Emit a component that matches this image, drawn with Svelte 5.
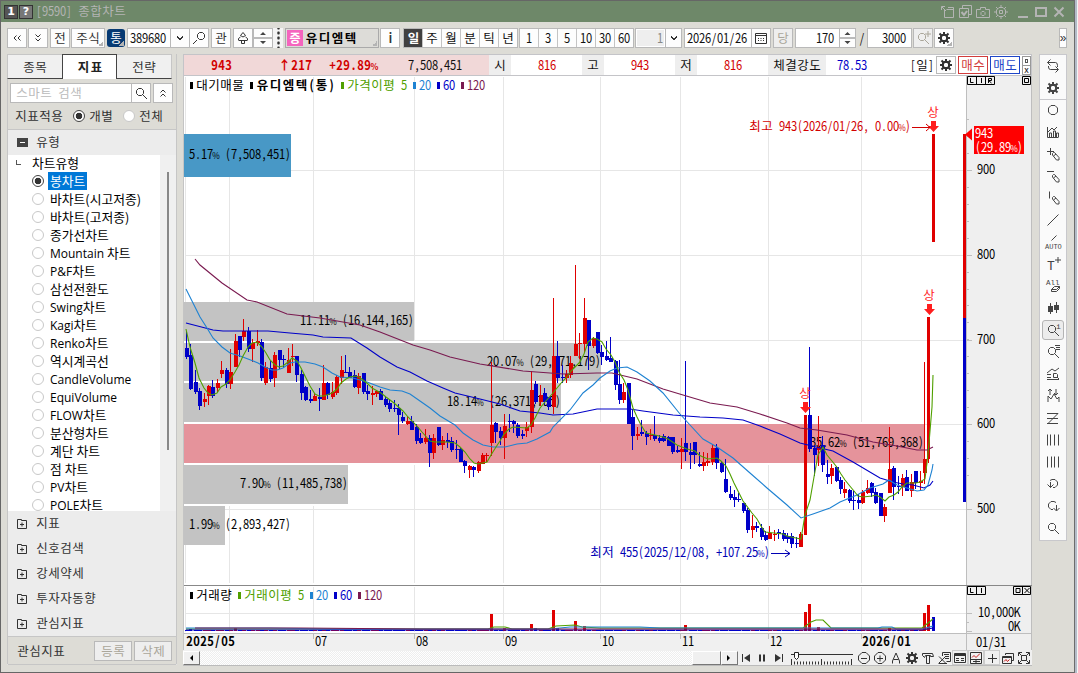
<script lang="ts">
	interface Run {
		text: string;
		wide: boolean;
		x: number;
		xs: string;
	}

	const HALF = 6;
	const FULL = 12;
	const SQUEEZE = 0.86;

	// fixed cell text: half width cells for latin, full width cells for hangul
	function layout(text: string, bold = false) {
		const half = bold ? HALF + 1 : HALF;
		const full = bold ? FULL + 1 : FULL;
		const runs: Run[] = [];
		let width = 0;
		for (const part of text.match(/[\x00-\x7f]+|[^\x00-\x7f]+/g) ?? []) {
			const wide = part.charCodeAt(0) > 127;
			const cell = wide ? full : half;
			const k = wide ? 1 : SQUEEZE;
			const xs = [...part].map((_, i) => (((i + 0.5) * cell) / k).toFixed(2)).join(' ');
			runs.push({ text: part, wide, x: width, xs });
			width += part.length * cell;
		}
		return { runs, width };
	}

	const chartTypes = [
		'봉차트', '바차트(시고저종)', '바차트(고저종)', '종가선차트', 'Mountain 차트', 'P&F차트',
		'삼선전환도', 'Swing차트', 'Kagi차트', 'Renko차트', '역시계곡선', 'CandleVolume',
		'EquiVolume', 'FLOW차트', '분산형차트', '계단 차트', '점 차트', 'PV차트', 'POLE차트'
	];
	const groups = ['지표', '신호검색', '강세약세', '투자자동향', '관심지표'];
	const periods = ['일', '주', '월', '분', '틱', '년'];
	const minutes = ['1', '3', '5', '10', '30', '60'];

	// colour, high, low, body top, body bottom
	const candles = `b331,359,348,357 b344,390,355,389 b370,394,382,392 b388,410,391,406 r393,407,399,402
r385,405,386,396 b380,398,387,396 r379,392,383,388 r361,378,370,374 b368,388,370,384
r349,389,372,384 r334,367,341,367 b336,357,336,350 r319,341,331,337 b327,352,331,349
r339,362,343,349 r330,346,341,343 b339,381,342,378 r362,385,367,383 b361,382,368,379
r352,387,355,378 b350,369,350,360 b355,368,359,360 r348,373,360,373 r344,366,356,357
b356,382,356,375 b370,400,374,393 b386,401,387,400 b390,403,399,401 r393,401,396,401
b388,411,397,399 r365,400,383,400 b382,399,383,395 r382,399,392,397 r375,395,377,393
r356,384,370,378 b355,373,372,373 b367,378,372,378 b370,388,375,387 r373,394,376,388
b373,394,373,392 b385,400,391,394 r386,405,393,395 r390,397,391,394 b389,400,391,400
b396,407,399,405 b399,412,403,409 b400,412,408,409 b404,435,408,415 b412,423,417,421
r416,425,421,424 b416,430,421,430 b424,444,427,441 b433,444,438,443 r429,444,438,442
b435,467,438,453 r434,459,438,453 b427,446,427,445 r436,450,440,445 b433,448,440,442
b437,452,441,450 b440,459,449,450 b447,462,449,462 b460,473,461,466 r465,478,466,470
b466,477,467,470 r461,473,462,471 r453,464,455,464 r453,462,455,456 r362,456,425,443
b422,443,423,432 b427,445,431,438 r414,459,426,438 b414,432,421,422 b420,433,421,424
b423,438,425,436 b430,439,434,436 r422,437,427,431 r371,433,390,427 b381,404,384,402
r385,406,395,402 b388,405,393,402 b397,410,397,407 r298,414,356,407 b341,383,356,378
b365,383,377,378 r370,383,374,378 r356,378,363,375 r265,356,344,356 r333,359,343,344
r298,352,318,344 b320,370,320,346 r337,348,338,346 b332,354,332,353 b345,365,352,357
b341,361,356,360 b337,362,358,362 b360,390,361,385 b360,404,384,400 r383,403,392,400
b383,424,383,424 b410,450,417,436 r427,440,434,436 b420,436,432,434 b431,445,433,437
r429,440,435,436 b416,441,435,439 b435,443,438,441 b434,442,436,441 b436,446,437,446
b437,454,437,452 b446,453,450,452 r438,469,449,452 b361,461,443,452 b443,469,452,455
b442,464,442,455 b452,467,464,466 r452,471,462,466 r453,466,461,463 r444,465,448,462
b444,469,448,463 b462,473,463,472 b459,493,479,492 b486,500,494,498 b490,507,497,500
b493,502,499,500 b503,513,503,511 b508,533,510,530 r515,538,526,530 b522,532,526,528
b524,540,528,537 b531,541,535,540 r526,539,533,539 r530,541,534,535 b529,539,532,534
b530,541,533,539 b533,543,536,539 b533,548,536,544 b537,548,543,544 r532,547,534,547
r415,535,415,535 b347,452,415,449 b445,476,448,455 r416,466,447,450 b436,472,445,465
b460,484,474,477 r464,484,468,476 b466,482,467,481 b477,494,480,489 r482,498,489,493
b489,503,490,501 b491,510,500,501 b494,509,500,503 r490,504,492,503 r480,494,488,493
b482,497,483,493 b488,504,492,503 b493,516,493,516 r504,522,507,516 r427,493,469,493
b466,500,468,487 b476,494,486,487 r474,496,478,487 b470,491,477,491 r474,497,482,491
b471,489,471,483 r471,490,481,483 r362,484,459,473 r317,463,317,459 r134,242,134,242`
		.split(/\s+/)
		.map((s, i) => {
			const [high, low, top, bottom] = s.slice(1).split(',').map(Number);
			const x = Math.floor(186.4 + i * 4.42);
			return { x, up: s[0] === 'r', high, low, top, bottom };
		});

	const averages = [
		{
			color: '#7a1a50',
			points:
				'195,259 200,265 222,283 247,300 257,302 287,314 320,318 360,325 380,332 413,345 430,350 450,357 480,364 523,371 550,373 563,374 597,373 612,373 637,379 663,389 683,395 710,403 737,407 760,414 787,423 800,428 817,430 847,435 873,442 897,446 917,450 927,450 933,447'
		},
		{
			color: '#0000c8',
			points:
				'186,323 213,330 223,331 268,331 290,333 313,335 323,337 351,338 367,348 380,357 397,367 410,372 427,381 443,388 455,393 480,399 500,404 520,411 540,413 553,415 573,414 597,409 630,409 643,411 673,415 700,417 723,418 743,420 760,426 780,434 800,443 820,448 833,451 853,462 880,478 893,482 903,484 913,485 924,488 930,485 933,481'
		},
		{
			color: '#1e82d2',
			points:
				'186,289 193,303 200,317 207,328 213,338 222,347 230,353 240,356 248,359 258,363 265,367 272,370 277,370 283,368 290,363 295,362 305,362 315,364 323,367 332,373 340,377 353,378 367,382 380,387 390,390 402,391 410,394 420,401 430,408 440,416 455,425 463,433 473,440 483,445 493,447 505,447 517,444 527,443 537,439 550,432 553,427 570,410 583,393 593,385 600,378 610,371 617,368 627,367 637,372 650,381 663,393 680,414 690,425 703,439 717,447 733,458 750,473 767,488 787,505 801,518 813,514 830,508 840,502 857,495 870,488 883,484 889,480 897,485 907,488 917,491 924,490 928,485 932,470 933,464'
		},
		{
			color: '#50a000',
			points:
				'186,329 190,347 195,363 199,378 204,388 208,393 212,395 217,393 221,387 226,384 230,380 235,372 239,365 243,356 248,347 252,343 257,342 262,347 266,353 270,360 275,365 279,367 283,366 288,362 292,358 297,361 301,368 306,378 310,386 315,394 319,396 324,396 332,393 337,389 341,383 346,379 350,377 355,376 359,377 363,380 368,384 372,388 381,393 386,397 394,403 403,411 408,417 417,426 422,432 430,441 435,442 447,442 455,443 460,447 465,452 470,459 474,463 478,464 487,462 491,455 496,447 500,441 504,434 509,429 513,427 527,428 531,425 535,418 540,408 545,402 553,393 557,388 562,382 566,378 571,371 575,367 580,362 584,354 588,342 593,338 597,339 602,342 606,349 611,355 615,362 619,372 624,380 628,390 633,408 637,417 641,425 646,433 655,435 663,437 668,439 677,445 687,449 695,451 699,455 703,457 708,459 717,458 721,461 726,466 730,474 734,483 739,493 743,501 752,513 757,519 761,526 765,532 774,533 783,534 787,536 796,538 801,539 805,515 810,500 814,477 818,455 823,447 827,455 832,461 836,466 841,474 845,480 849,485 854,491 858,496 863,497 872,496 876,495 880,497 885,501 889,497 894,495 898,492 902,487 907,483 916,483 920,482 925,479 927,463 929,443 932,407 933,375'
		}
	];

	// volume bars that stand out from the floor: top edge by candle index
	const volumePeaks: Record<number, number> = {
		1: 629, 11: 628, 69: 614, 72: 628, 78: 624, 79: 628, 83: 610, 84: 628, 88: 621, 90: 626,
		113: 625, 140: 612, 141: 604, 143: 627, 159: 628, 167: 613, 168: 605, 169: 617
	};
	const redVolume = [113, 141, 143, 159];

	const bands = [
		{ y: 134, h: 43, end: 291, color: '#4898c6', text: '5.17% (7,508,451)', ty: 159 },
		{ y: 302, h: 39, end: 414, color: '#c3c3c3', text: '11.11% (16,144,165)', ty: 325 },
		{ y: 343, h: 38, end: 601, color: '#c3c3c3', text: '20.07% (29,171,179)', ty: 366 },
		{ y: 383, h: 39, end: 561, color: '#c3c3c3', text: '18.14% (26,371,795)', ty: 406 },
		{ y: 424, h: 39, end: 924, color: '#e5939b', text: '35.62% (51,769,368)', ty: 447 },
		{ y: 465, h: 39, end: 348, color: '#c3c3c3', text: '7.90% (11,485,738)', ty: 488 },
		{ y: 506, h: 39, end: 225, color: '#c3c3c3', text: '1.99% (2,893,427)', ty: 529 }
	];

	const gridX = [185, 229, 313, 414, 503, 600, 680, 768, 861];
	const priceLevels = [900, 800, 700, 600, 500].map((p) => ({ p, y: Math.round(170 + (900 - p) * 0.8475) }));
	const minorTicks = Array.from({ length: 22 }, (_, i) => Math.round(119 + i * 16.95));
	const months = [
		['07', 315], ['08', 416], ['09', 505], ['10', 602], ['11', 682], ['12', 770]
	] as const;

	const priceLegend = [
		[190, '대기매물', '#000'], [250, '유디엠텍(통)', '#000'], [341, '가격이평 5', '#50a000'],
		[413, '20', '#1e82d2'], [437, '60', '#0000c8'], [461, '120', '#7a1a50']
	] as const;
	const volumeLegend = [
		[190, '거래량', '#000'], [238, '거래이평 5', '#50a000'],
		[310, '20', '#1e82d2'], [334, '60', '#0000c8'], [358, '120', '#7a1a50']
	] as const;
	const limitMarks = [
		[933, 116], [929, 299], [805, 397]
	];

	interface Icon {
		d?: string;
		fill?: string;
		bold?: string;
		text?: [number, number, number, string][];
	}

	const pencil = 'M7.5 7.5l1-1h1l4.500 5v2.500h-2.500l-4-5zM8.500 10l2.500-2';
	const lens = 'M5.5 3.5h3l2 2v3l-2 2h-3l-2-2v-3zM10 10l4 4';
	const icons: Record<string, Icon> = {
		loop: { d: 'M5.5 1.5l-3 3 3 3M2.5 4.5h8q2 0 2 3v1.5M10.500 8.500l3 3-3 3M13 11.500h-7.500q-2 0-2-2.500v-1' },
		gear: { bold: 'M6.500 5h3L11 6.500v3L9.500 11h-3L5 9.500v-3zM8 2v3M8 11v3M2 8h3M11 8h3M3.500 3.500l2 2M10.500 10.500l2 2M12.500 3.500l-2 2M5.500 10.500l-2 2' },
		sun: { d: 'M6 3.500h4L12.500 6v4L10 12.500H6L3.500 10V6zM6.500 6.500h3v3h-3zM8 1v3M8 12v3M1 8h3M12 8h3M3 3l2 2M11 11l2 2M13 3l-2 2M5 11l-2 2' },
		circle: { d: 'M6 3.5h4l2.500 2.500v4l-2.500 2.500h-4l-2.500-2.500v-4z' },
		bars: { d: 'M2.500 3v10.500h11M4.500 13v-4h2v4M8.500 13v-6h2v6M11.500 13v-4h2v4M3 8l4-4 2 2 3-3' },
		plusPen: { d: 'M2 5.500h7M5.500 2v7' + pencil },
		minusPen: { d: 'M2 3.500h7' + pencil },
		barPen: { d: 'M4.500 1.500v7' + pencil },
		line: { d: 'M2.500 13.500l11-11' },
		auto: { d: 'M6.500 6.500l5-5', text: [[0, 15, 7, 'AUTO']] },
		text: { d: 'M13 1v6M10 4h6', text: [[2, 14, 13, 'T']] },
		eraser: { d: 'M6.500 11.500l3-3h5v2l-3 3h-5zM6.500 11.500h5l3-3', text: [[1, 7, 7.5, 'All']] },
		candles: { d: 'M5.500 3v11M11.500 2v11', fill: 'M3 6h5v6H3zM9 5h5v5H9z' },
		lensInfo: { d: lens, text: [[11, 7, 8, 'i']] },
		lensList: { d: lens + 'M10 1.500h5M11 3.500h4M11 5.500h4' },
		lensChart: { d: 'M2 7l5-4 3 2 4-3M2 8.500h4M2 11.500h4M2 13.500h12M8.500 7.500h3l1 1v3h-4zM12 11l2 2' },
		arrows: { d: 'M3 14V8l3 3 3-5 3 5 2-2v5M3 3l2-2 2 2M5 1v6M9 5l2 2 2-2M11 1v6' },
		zed: { d: 'M2 3.500h11M2 8.500h11M2 13.500h11M13 3.500L3 13.500' },
		fib: { d: 'M2.500 2.500v11M5.500 2.500v11M9.500 2.500v11M13.500 2.500v11' },
		four: { d: 'M2.500 2.500v11M6.500 2.500v11M9.500 2.500v11M13.500 2.500v11' },
		undo: { d: 'M5 4.500l2-1h3l2.500 2.500v3l-2.500 2.500h-2M5.500 6v5.500M2.500 8.500l3 3 3-3' },
		redo: { d: 'M11 4.500l-2-1H6L3.500 6v3L6 11.500h2M11.500 7v5.500M8.500 10l3 3 3-3' },
		search: { d: lens },
		searchBack: { d: 'M8.500 2.500h3l2 2v3l-2 2h-3l-2-2v-3zM6 10l-4 4' },
		searchPlus: { d: lens + 'M13 1v6M10 4h6' },
		chevron: { d: 'M5 6l3 3 3-3M5 7l3 3 3-3' },
		up2: { d: 'M5.500 7.500L8 5l2.500 2.500M5.500 11.500L8 9l2.500 2.500' },
		down2: { d: 'M5.500 4.500L8 7l2.500-2.500M5.500 8.500L8 11l2.500-2.500' },
		left2: { d: 'M7.500 5.500L5 8l2.500 2.500M11.500 5.500L9 8l2.500 2.500' },
		flower: { d: 'M8 2.500l-2.500 3L8 7l2.500-1.500zM3.500 10v-1.500l2-1.500M12.500 10v-1.500l-2-1.500M3.500 10.500h9M6.500 11v2.500h3V11' },
		calendar: { d: 'M2.500 3.500h11v10h-11zM2.500 5.500h11M5 8.500h1M7.500 8.500h1M10 8.500h1M5 10.500h1M7.500 10.500h1M10 10.500h1' },
		folder: { d: 'M3.500 3.500h4v1h5v8h-9zM8 6.500v4M6 8.500h4' },
		sendOut: { d: 'M2.500 6V2.500H6M3 3l4 4M5.500 5.500v8h9v-8h-7M9 3.500h5.500V7' },
		stackCheck: { d: 'M5.500 4V1.500h9v9H12M2.500 4.500h9v9h-9z', bold: 'M4.500 8l2.500 3 3-4' },
		camera: { d: 'M1.500 5.500h4v-2h5v2h4v8h-13zM7 7.500h2l1 1v2l-1 1H7l-1-1v-2z' },
		minus: { bold: 'M3 13h10' },
		square: { bold: 'M3 4h10v8H3z' },
		close: { bold: 'M3.500 3.500l9 9M12.500 3.500l-9 9' },
		first: { d: 'M4.500 4v8', fill: 'M12 4v8L6 8z' },
		pause: { bold: 'M6 4.500v7M10 4.500v7' },
		last: { d: 'M12.500 4v8', fill: 'M5 4v8l6-4z' },
		zoomOut: { d: 'M6 2.500h4L13.500 6v4L10 13.500H6L2.500 10V6zM5 8.500h6' },
		zoomIn: { d: 'M6 2.500h4L13.500 6v4L10 13.500H6L2.500 10V6zM5 8.500h6M8 5.500v6' },
		letter: { d: 'M4.500 13.500V11L8 3l3.500 8v2.500M5.500 9.500h5' },
		hammer: { d: 'M2.500 3.500h10l1 3h-3v-1h-5l-1 2-2-2zM6.500 6v7.500h3V6' },
		tableX: { d: 'M6.500 6V2.500h8v9h-4M8 4.500h5M9 6.500h4M9 8.500h4M3 6.500l7 7M9.500 6.500l-7 7M3 13.500h8' },
		table: { d: 'M2.500 3.500h11v9h-11zM4 8.500h3M9 8.500h3M4 10.500h3M9 10.500h3', bold: 'M3 5h10' },
		chartBox: { d: 'M2.500 2.500h11v11h-11zM2.500 9.500h11M5 11.500h7M8 10v3' },
		cross: { d: 'M8.500 4v9M4 8.500h9' },
		windows: { d: 'M5.500 5V3.500h8v7H12M2.500 6.500h9v7h-9z', bold: 'M3 7h8' },
		expand: { d: 'M2.500 6V2.500H6M10 2.500h3.500V6M13.500 10v3.500H10M6 13.500H2.500V10M5.500 5.500h5v5h-5zM3 3l2.500 2.500M13 3l-2.500 2.500M3 13l2.500-2.500M13 13l-2.500-2.500' }
	};
	const redTraces: Record<string, string> = {
		chartBox: 'M4 7.500l2-2 2 2 4-4',
		windows: 'M4 11.500l2-2 1.500 2 2-2'
	};

	const sideTools = [
		'loop', 'gear', 'circle', 'bars', 'plusPen', 'minusPen', 'barPen', 'line', 'auto', 'text', 'eraser',
		'candles', 'lensInfo', 'lensList', 'lensChart', 'arrows', 'zed', 'fib', 'four', 'undo', 'redo', 'search'
	];
	const titleTools = ['sendOut', 'stackCheck', 'camera', 'sun'];
	const playback = ['first', 'pause', 'last'];
	const chartTools = [
		'zoomOut', 'zoomIn', 'letter', 'gear', 'hammer', 'tableX', 'table', 'chartBox', 'cross', 'windows', 'expand'
	];
</script>

{#snippet mono(x: number, y: number, text: string, bold = false)}
	<g class="mono" class:bold>
		{#each layout(text, bold).runs as run}
			{#if run.wide}
				<text class="wide" x={run.xs} transform="translate({x + run.x} {y})">{run.text}</text>
			{:else}
				<text x={run.xs} transform="translate({x + run.x} {y}) scale({SQUEEZE} 1)"
					>{#each run.text.split(/(%)/) as piece}<tspan class:percent={piece === '%'}>{piece}</tspan>{/each}</text
				>
			{/if}
		{/each}
	</g>
{/snippet}

{#snippet label(text: string, bold = false)}
	<svg class="label" width={layout(text, bold).width} height="16">{@render mono(0, 13, text, bold)}</svg>
{/snippet}

{#snippet icon(name: string)}
	{@const shape = icons[name]}
	<svg class="icon" viewBox="0 0 16 16" width="16" height="16">
		{#if shape.d}<path d={shape.d} />{/if}
		{#if shape.bold}<path class="thick" d={shape.bold} />{/if}
		{#if shape.fill}<path class="solid" d={shape.fill} />{/if}
		{#if redTraces[name]}<path class="trace" d={redTraces[name]} />{/if}
		{#each shape.text ?? [] as [x, y, size, text]}
			<text {x} {y} font-size={size}>{text}</text>
		{/each}
	</svg>
{/snippet}

{#snippet spinner()}
	<span class="spinner">
		<svg viewBox="0 0 18 18" width="100%" height="18" preserveAspectRatio="xMidYMid slice">
			<path d="M0 9h18" stroke="#bbb" stroke-width="2" />
			<path d="M6 6l3-3 3 3zM6 12l3 3 3-3z" fill="#444" />
		</svg>
	</span>
{/snippet}

<div class="window">
	<header class="titlebar">
		<span class="badge">1</span>
		<span class="badge grey">?</span>
		<span class="caption">{@render label('[9590] 종합차트')}</span>
		<span class="title-tools">
			{#each titleTools as name}{@render icon(name)}{/each}
		</span>
		<span class="window-buttons">
			{@render icon('minus')}{@render icon('square')}{@render icon('close')}
		</span>
	</header>

	<div class="toolbar">
		<button class="btn">{@render icon('left2')}</button>
		<button class="btn gap1">{@render icon('down2')}</button>
		<button class="btn gap2">{@render label('전')}</button>
		<button class="btn gap1 stock corner">{@render label('주식')}</button>
		<button class="btn gap2 unified corner">{@render label('통')}</button>
		<span class="field code">{@render label('389680')}</span>
		<button class="btn join">{@render icon('chevron')}</button>
		<button class="btn join">{@render icon('searchBack')}</button>
		<button class="btn gap2">{@render label('관')}</button>
		<button class="btn gap2">{@render icon('flower')}</button>
		{@render spinner()}
		<span class="more"></span>
		<span class="name corner"><i>증</i>{@render label('유디엠텍', true)}</span>
		<button class="btn gap1">{@render label('i', true)}</button>
		<div class="segments">
			{#each periods as period, i}
				<button class:active={i === 0}>{@render label(period, i === 0)}</button>
			{/each}
		</div>
		<div class="segments minutes">
			{#each minutes as minute}<button>{@render label(minute)}</button>{/each}
		</div>
		<span class="field unit"><em>{@render label('1')}</em></span>
		<button class="btn join narrow">{@render icon('chevron')}</button>
		<span class="field date">{@render label('2026/01/26')}</span>
		<button class="btn join">{@render icon('calendar')}</button>
		<button class="btn gap2 dim">{@render label('당')}</button>
		<span class="field count">{@render label('170')}</span>
		{@render spinner()}
		<span class="slash">{@render label('/')}</span>
		<span class="field total">{@render label('3000')}</span>
		<button class="btn gap1 dim">{@render icon('searchPlus')}</button>
		<button class="btn gap1 corner">{@render icon('gear')}</button>
		<button class="btn overflow">»</button>
	</div>

	<div class="body">
		<aside class="sidebar">
			<nav class="tabs">
				<span>{@render label('종목')}</span>
				<span class="active">{@render label('지표', true)}</span>
				<span>{@render label('전략')}</span>
			</nav>
			<div class="search">
				<span class="query">{@render label('스마트 검색')}</span>
				<button class="btn join">{@render icon('search')}</button>
				<button class="btn gap2">{@render icon('up2')}</button>
			</div>
			<div class="apply">
				{@render label('지표적용')}
				<i class="radio on"></i>{@render label('개별')}
				<i class="radio"></i>{@render label('전체')}
			</div>
			<div class="group open"><i class="folder-open"></i>{@render label('유형')}</div>
			<div class="tree">
				<ul>
					<li class="root">차트유형</li>
					{#each chartTypes as type, i}
						<li class:selected={i === 0}>
							<i class="radio" class:on={i === 0}></i>
							<span
								>{#each type.split(/([A-Za-z&]+)/) as part, j}{#if j % 2}<em>{part}</em>{:else}{part}{/if}{/each}</span
							>
						</li>
					{/each}
				</ul>
				<div class="scroll"><i></i></div>
			</div>
			{#each groups as group}
				<div class="group">{@render icon('folder')}{@render label(group)}</div>
			{/each}
			<div class="favorites">
				{@render label('관심지표')}
				<button>{@render label('등록')}</button>
				<button>{@render label('삭제')}</button>
			</div>
		</aside>

		<main class="main">
			<div class="quote">
				<div class="price">
					{@render label('943', true)}
					<span class="change">{@render label('↑217', true)}</span>
					<span class="rate">{@render label('+29.89%', true)}</span>
					<span class="volume">{@render label('7,508,451')}</span>
				</div>
				{#each [['시', '816'], ['고', '943'], ['저', '816']] as [key, value]}
					<span class="key">{@render label(key)}</span>
					<span class="value">{@render label(value)}</span>
				{/each}
				<span class="key strength">{@render label('체결강도')}</span>
				<span class="power">{@render label('78.53')}</span>
				<span class="mode">{@render label('[일]')}</span>
				<button class="btn small">{@render icon('gear')}</button>
				<button class="trade buy">{@render label('매수')}</button>
				<button class="trade sell">{@render label('매도')}</button>
				<span class="mini"><i></i><b>x</b></span>
			</div>

			<svg class="chart" viewBox="183 76 849 574" width="849" height="574">
				<rect x="183" y="76" width="1" height="574" fill="#c4c4c4" />
				<rect x="966" y="76" width="66" height="574" fill="#efefef" />
				<rect x="184" y="633" width="782" height="17" fill="#f0f0f0" />

				{#each gridX as x}
					<path class="grid" d="M{x + 0.5} 77V583M{x + 0.5} 587V632" />
				{/each}
				{#each priceLevels as { y }}
					<path class="grid" d="M185 {y + 0.5}H966" />
				{/each}
				<path class="grid" d="M185 613.500H966" />

				{#each bands as band, i}
					<rect x="184" y={band.y} width={band.end - 184} height={band.h} fill={band.color} />
					{#if i > 1}
						<rect x="184" y={band.y - 2} width={Math.max(band.end, bands[i - 1].end) - 184} height="2" fill="#fff" />
					{/if}
				{/each}
				{#each bands as band}
					{@render mono(Math.max(189, band.end - band.text.length * 6), band.ty, band.text)}
				{/each}

				{#each candles as c}
					<g fill={c.up ? '#e00000' : '#0000c8'}>
						<rect x={c.x} y={c.high} width="1" height={c.low - c.high} />
						<rect x={c.x - 1} y={c.top} width={c.bottom - c.top > 80 ? 3 : 4} height={c.bottom - c.top} />
					</g>
				{/each}
				{#each averages as line}
					<polyline class="average" points={line.points} stroke={line.color} />
				{/each}

				{#each limitMarks as [x, y]}
					<g fill="#ff1e1e">
						{@render mono(x - 6, y + 1, '상')}
						<path d="M{x - 2} {y + 5}h5v5h3l-5.500 6-5.500-6h3z" />
					</g>
				{/each}
				<g fill="#d20000" stroke="none">
					{@render mono(749, 131, '최고 943(2026/01/26, 0.00%)')}
					<path d="M912 127.500H930M926 124l4 3.500-4 3.500" fill="none" stroke="#d20000" />
				</g>
				<g fill="#0000b4">
					{@render mono(590, 557, '최저 455(2025/12/08, +107.25%)')}
					<path d="M771 553.500H790M785 550l5 3.500-5 3.500" fill="none" stroke="#0000b4" />
				</g>

				<rect x="963" y="134" width="3" height="184" fill="#e00000" />
				<rect x="963" y="318" width="3" height="184" fill="#0000c8" />

				{#each priceLegend as [x, text, color], i}
					<rect {x} y="82" width="3" height="7" fill={color} />
					<g fill={color}>{@render mono(x + 6, 90, text, i === 1)}</g>
				{/each}

				{#each candles as c, i}
					<rect
						x={c.x - 1}
						y={volumePeaks[i] ?? 630}
						width={volumePeaks[i] ? 3 : 4}
						height={631 - (volumePeaks[i] ?? 630)}
						fill={i !== 169 && (c.up || redVolume.includes(i)) ? '#e00000' : '#0000c8'}
					/>
				{/each}
				<path class="average" stroke="#50a000" d="M186 629H488L494 627L505 627L512 629H548L556 626L575 625L582 627L600 628H803L811 622L816 620H823L831 628H922L933 619" />
				<path class="average" stroke="#1e82d2" d="M186 628H270L330 629H550L570 627H640L660 628H805L878 628L882 627H892L896 629H922L933 626" />
				<path class="average" stroke="#0000c8" d="M186 630H922L933 628" />
				<path class="average" stroke="#7a1a50" d="M195 628H300L420 629H930" />
				{#each volumeLegend as [x, text, color]}
					<rect {x} y="592" width="3" height="7" fill={color} />
					<g fill={color}>{@render mono(x + 6, 600, text)}</g>
				{/each}

				<path class="frame" d="M966.500 76V650M184 633.500H1032M1031.500 76V650" />
				<path d="M184 585.500H1032" stroke="#888" />
				{#each priceLevels as { p, y }}
					<path class="frame" d="M967 {y + 0.5}h5" />
					{@render mono(977, y + 4, String(p))}
				{/each}
				{#each minorTicks as y}
					<path class="frame" d="M967 {y + 0.5}h2" />
				{/each}
				<path class="frame" d="M967 613.500h5M967 622.500h2M967 631.500h5" />
				{@render mono(978, 617, '10,000K')}
				{@render mono(1008, 631, '0K')}

				{@render mono(186, 646, '2025/05', true)}
				{#each months as [text, x]}
					<path class="frame" d="M{x - 1.5} 634v5" />
					{@render mono(x, 646, text)}
				{/each}
				<path class="frame" d="M861.500 634v5" />
				{@render mono(862, 646, '2026/01', true)}
				{@render mono(976, 647, '01/31')}

				<path d="M965 134.500l7-6v12z" fill="#f00" />
				<rect x="974" y="126" width="50" height="28" fill="#f00" />
				<g fill="#fff">
					{@render mono(975, 138, '943')}
					{@render mono(975, 152, '(29.89%)')}
				</g>

				<g class="toggles">
					<path d="M967.500 76.500h27v8h-27zM976.500 76v9M985.500 76v9M1022.500 76.500h8v8h-8zM1024.500 78.500h4v4h-4z" />
					<path d="M970.500 78v4.500h3M981.500 78v5M988.500 83v-4.500h3v2h-3l3 2.500" />
					<path d="M967.500 586.500h18v8h-18zM976.500 586v9M1013.500 586.500h17v8h-17zM1022.500 586v9M1016 588.500h4v4h-4zM1024.500 588l5 5M1029.500 588l-5 5" />
					<path d="M970.500 588v4.500h3M981.500 588v5" />
				</g>
			</svg>

			<div class="controls">
				<i class="arrow left"></i>
				<span class="track"><i></i></span>
				<i class="arrow right"></i>
				<span class="icon-row">{#each playback as name}{@render icon(name)}{/each}</span>
				<svg class="slider" viewBox="0 0 62 15" width="62" height="15">
					<path d="M0 4.500h62" stroke="#333" />
					<path d="M0 13h62" stroke="#333" stroke-width="3" stroke-dasharray="1 2" />
					<path d="M0.500 9v6M30.500 9v6M60.500 9v6" stroke="#333" />
					<path d="M3.500 2.500h4v5l-2 2-2-2z" fill="#fff" stroke="#222" />
				</svg>
				<span class="icon-row tools">
					{#each chartTools as name}
						<span class:boxed={['table', 'chartBox', 'cross'].includes(name)}>{@render icon(name)}</span>
					{/each}
				</span>
			</div>
		</main>

		<div class="side-tools">
			{#each sideTools as name, i}
				<span class:divided={i === 1} class:pressed={name === 'lensInfo'}>{@render icon(name)}</span>
			{/each}
		</div>
	</div>
</div>

<style>
	:global(body) {
		margin: 0;
		background: #f4f4f4;
	}

	.window {
		width: 1074px;
		height: 673px;
		overflow: hidden;
		box-sizing: border-box;
		border: 1px solid #666;
		border-right: 0;
		box-shadow: 1px 0 #6c6c6c, 3px 0 #b4bcc8;
		background: #dddcd6;
		font: 12px 'Noto Sans CJK KR', sans-serif;
		color: #111;
	}

	.window :is(button, i, em, b) {
		font-style: normal;
		box-sizing: border-box;
	}

	.mono text {
		font: 13px 'Noto Sans CJK KR', sans-serif;
		text-anchor: middle;
		white-space: pre;
	}

	.mono .wide {
		font-size: 12.5px;
	}

	.mono .percent {
		font-size: 9.5px;
	}

	.mono.bold text {
		font-weight: 700;
	}

	.label {
		display: block;
		flex: none;
		overflow: visible;
		fill: currentColor;
	}

	.icon {
		display: block;
		flex: none;
		overflow: visible;
		fill: none;
		stroke: currentColor;
	}

	.icon text {
		font-family: 'Liberation Mono', monospace;
		fill: currentColor;
		stroke: none;
	}

	.icon .thick {
		stroke-width: 2;
	}

	.icon .solid {
		fill: currentColor;
		stroke: none;
	}

	.icon .trace {
		stroke: #c81e1e;
	}

	.titlebar {
		display: flex;
		align-items: center;
		height: 21px;
		padding-left: 3px;
		background: #6e8869;
		color: #b4b4b4;
	}

	.badge {
		box-sizing: border-box;
		width: 14px;
		height: 14px;
		margin-right: 1px;
		border: 1px solid #333;
		background: #555;
		color: #fff;
		font: bold 11px/12px 'DejaVu Sans', sans-serif;
		text-align: center;
	}

	.badge.grey {
		background: #777;
	}

	.caption {
		margin-left: 2px;
		margin-top: -1px;
	}

	.title-tools,
	.window-buttons {
		display: flex;
		gap: 2px;
	}

	.title-tools {
		margin-left: auto;
	}

	.window-buttons {
		margin: 0 7px 0 6px;
	}

	.toolbar {
		display: flex;
		align-items: center;
		height: 20px;
		padding: 6px 0 6px 6px;
	}

	.btn {
		display: flex;
		align-items: center;
		justify-content: center;
		flex: none;
		width: 20px;
		height: 20px;
		padding: 0;
		border: 1px solid #b9b9b9;
		background: #fdfdfd;
		color: #333;
	}

	.gap1 {
		margin-left: 1px;
	}

	.gap2 {
		margin-left: 2px;
	}

	.join {
		margin-left: -1px;
	}

	.stock {
		width: 34px;
	}

	.corner {
		background-image: linear-gradient(135deg, transparent 50%, #b4b4b4 50%);
		background-position: right 1px bottom 1px;
		background-repeat: no-repeat;
		background-size: 5px 5px;
	}

	.unified {
		width: 18px;
		height: 18px;
		border: 0;
		border-radius: 3px;
		background-color: #063a73;
		color: #fff;
	}

	.field {
		display: flex;
		align-items: center;
		flex: none;
		box-sizing: border-box;
		height: 20px;
		border: 1px solid #b9b9b9;
		background: #fff;
	}

	.code {
		width: 44px;
		margin-left: 2px;
		padding-left: 2px;
	}

	.spinner {
		flex: none;
		box-sizing: border-box;
		width: 20px;
		height: 20px;
		border: 1px solid #b9b9b9;
		background: #fdfdfd;
	}

	.spinner svg {
		display: block;
	}

	.more {
		width: 10px;
		height: 20px;
		background: radial-gradient(circle, #333 1.1px, transparent 1.6px) center/5px 5px repeat-y #f4f4f4;
	}

	.name {
		display: flex;
		align-items: center;
		box-sizing: border-box;
		width: 94px;
		height: 20px;
		margin-left: 2px;
		border: 1px solid #aaa;
		background-color: #dddcd8;
		color: #000;
	}

	.name i {
		width: 16px;
		height: 16px;
		margin: 0 2px 0 1px;
		background: #f564be;
		color: #fff;
		font: bold 12px/15px 'Noto Sans CJK KR', sans-serif;
		text-align: center;
	}

	.segments {
		display: flex;
		margin-left: 3px;
		border: 1px solid #b9b9b9;
	}

	.segments button {
		display: flex;
		align-items: center;
		justify-content: center;
		width: 19px;
		height: 18px;
		padding: 0;
		border: 0;
		border-right: 1px solid #c4c4c4;
		background: #fdfdfd;
		color: #111;
	}

	.segments button:last-child {
		border-right: 0;
		width: 18px;
	}

	.segments .active {
		background: #404040;
		color: #fff;
	}

	.minutes {
		margin-left: 1px;
	}

	.unit {
		width: 31px;
		margin-left: 1px;
		padding: 1px;
	}

	.unit em {
		display: flex;
		justify-content: flex-end;
		width: 27px;
		height: 16px;
		padding-right: 1px;
		background: #eee;
		color: #888;
	}

	.narrow {
		width: 17px;
	}

	.date {
		width: 68px;
		margin-left: 2px;
		padding-left: 2px;
	}

	.dim {
		color: #aaa69a;
		background: #eee;
	}

	.count,
	.total {
		justify-content: flex-end;
		padding-right: 5px;
	}

	.count {
		width: 45px;
		margin-left: 2px;
	}

	.count + .spinner {
		width: 17px;
		margin-left: -1px;
	}

	.slash {
		margin: 0 2px 0 3px;
	}

	.total {
		width: 45px;
	}

	.overflow {
		width: 8px;
		margin-left: auto;
		margin-right: 7px;
		font-size: 12px;
	}

	.body {
		display: flex;
		height: 618px;
		padding-left: 6px;
	}

	.sidebar {
		box-sizing: border-box;
		width: 170px;
		height: 611px;
		border-right: 1px solid #c6c6c6;
		border-left: 1px solid #c6c6c6;
		border-bottom: 1px solid #fff;
		color: #333;
	}

	.tabs {
		display: flex;
		height: 25px;
		margin-left: -1px;
	}

	.tabs span {
		display: flex;
		align-items: center;
		justify-content: center;
		box-sizing: border-box;
		width: 55px;
		border: 1px solid #c6c6c6;
		border-right-width: 0;
		border-bottom-color: #444;
		background: #f0f0f0;
	}

	.tabs span:last-child {
		border-width: 1px 1px 1px 0;
	}

	.tabs .active {
		width: 55px;
		border: 1px solid #444;
		border-bottom: 0;
		background: #fff;
		color: #222;
	}

	.search {
		display: flex;
		padding: 4px 0 0 2px;
	}

	.query {
		display: flex;
		align-items: center;
		box-sizing: border-box;
		width: 122px;
		height: 20px;
		padding-left: 5px;
		border: 1px solid #b9b9b9;
		background: #fff;
		color: #bbb;
	}

	.apply {
		display: flex;
		align-items: center;
		height: 26px;
		padding-left: 7px;
	}

	.radio {
		display: block;
		flex: none;
		width: 12px;
		height: 12px;
		border: 1px solid #c8c8c8;
		border-radius: 50%;
		background: #fff;
	}

	.radio.on {
		border-color: #444;
		background: radial-gradient(circle, #333 3px, #fff 3.6px);
	}

	.apply .radio {
		margin: 0 4px 0 10px;
	}

	.group {
		display: flex;
		align-items: center;
		gap: 6px;
		height: 25px;
		padding-left: 6px;
		background: #ececec;
	}

	.group .label {
		margin-top: -2px;
	}

	.group.open {
		height: 26px;
		border-top: 1px solid #c6c6c6;
		box-sizing: border-box;
		gap: 8px;
		padding-left: 9px;
	}

	.folder-open {
		width: 11px;
		height: 9px;
		background: linear-gradient(#fff, #fff) center/5px 1px no-repeat #444;
	}

	.tree {
		display: flex;
		height: 356px;
	}

	.tree ul {
		width: 152px;
		margin: 0;
		padding: 0;
		overflow: hidden;
		background: #fff;
		list-style: none;
	}

	.tree li {
		display: flex;
		align-items: center;
		height: 18px;
		padding-left: 24px;
		font-size: 12.8px;
		line-height: 18px;
		color: #000;
	}

	.tree li span {
		margin-left: 4px;
		padding: 0 2px;
		white-space: pre;
	}

	.tree em {
		font-family: 'Open Sans', sans-serif;
		font-size: 12px;
	}

	.tree .selected span {
		background: #0078d7;
		color: #fff;
	}

	.tree .root::before {
		content: '';
		width: 4px;
		height: 4px;
		margin: 0 11px 0 -16px;
		border: solid #555;
		border-width: 0 0 1px 1px;
	}

	.tree .root {
		height: 15px;
		padding: 0 0 2px 24px;
	}

	.scroll {
		flex: 1;
		padding: 17px 0 0 7px;
		background: #f0f0f0;
	}

	.scroll i {
		display: block;
		width: 2px;
		height: 278px;
		background: #888;
	}

	.favorites {
		display: flex;
		align-items: center;
		height: 27px;
		padding-left: 9px;
		border-top: 1px solid #c6c6c6;
		border-bottom: 1px solid #c6c6c6;
	}

	.favorites button {
		display: flex;
		align-items: center;
		justify-content: center;
		width: 38px;
		height: 20px;
		margin-left: 2px;
		padding: 0;
		border: 1px solid #b9b9b9;
		background: #eee;
		color: #aaa69a;
	}

	.favorites .label + button {
		margin-left: 29px;
	}

	.main {
		width: 849px;
		margin-left: 6px;
	}

	.quote {
		display: flex;
		align-items: center;
		box-sizing: border-box;
		height: 22px;
		border: 1px solid #c4c4c8;
		background: #fff;
	}

	.price {
		display: flex;
		align-items: center;
		box-sizing: border-box;
		width: 306px;
		height: 20px;
		padding-left: 27px;
		background: #f1d8d8;
		color: #d20000;
	}

	.change {
		margin-left: 46px;
	}

	.rate {
		margin-left: 17px;
	}

	.volume {
		margin-left: 30px;
		color: #111;
	}

	.key {
		display: flex;
		align-items: center;
		justify-content: center;
		width: 22px;
		height: 20px;
		margin-left: -1px;
		background: #eee;
	}

	.value {
		display: flex;
		justify-content: center;
		width: 72px;
		color: #d20000;
	}

	.value:nth-child(n + 5) {
		color: #d20000;
	}

	.strength {
		width: 58px;
	}

	.power {
		width: 73px;
		margin-left: 11px;
		color: #0000c8;
	}

	.mode {
		width: 26px;
	}

	.small {
		height: 18px;
	}

	.trade {
		display: flex;
		align-items: center;
		justify-content: center;
		width: 30px;
		height: 18px;
		margin-left: 2px;
		padding: 0;
		border: 1px solid;
		background: #fff;
	}

	.buy {
		color: #d23c3c;
	}

	.sell {
		color: #1e46c8;
	}

	.mini {
		display: flex;
		flex-direction: column;
		width: 7px;
		margin-left: 2px;
		border: 1px solid #999;
		font-size: 9px;
		line-height: 8px;
		text-align: center;
	}

	.mini i {
		height: 8px;
		border: 2px solid #fff;
		outline: 1px solid #555;
		outline-offset: -3px;
	}

	.mini b {
		font-weight: 400;
		border-top: 1px solid #999;
	}

	.chart {
		display: block;
		background: #fff;
		fill: #000;
	}

	.grid {
		stroke: #e6e6e6;
	}

	.frame {
		stroke: #bebebe;
	}

	.average {
		fill: none;
		stroke-width: 1.1;
	}

	.toggles path {
		fill: none;
		stroke: #000;
	}

	.controls {
		display: flex;
		align-items: center;
		height: 15px;
		background: #f0f0f0;
		color: #333;
		border-bottom: 1px solid #bbb;
	}

	.arrow {
		width: 17px;
		height: 14px;
		border: 1px solid;
		border-color: #fff #777 #777 #fff;
		background: #f0f0f0;
	}

	.arrow::before {
		content: '';
		display: block;
		width: 0;
		margin: 3px 5px;
		border: 3px solid transparent;
	}

	.arrow.left::before {
		margin-left: 3px;
		border-right-color: #000;
	}

	.arrow.right::before {
		border-left-color: #000;
	}

	.track {
		display: flex;
		justify-content: flex-end;
		width: 521px;
		height: 14px;
		background: repeating-conic-gradient(#fff 0 25%, #eee 0 50%) 0 0/2px 2px;
	}

	.track i {
		width: 29px;
		border: 1px solid;
		border-color: #fff #777 #777 #fff;
		background: #f0f0f0;
	}

	.icon-row {
		display: flex;
		height: 15px;
	}

	.slider {
		margin-left: 5px;
	}

	.tools {
		margin-left: 3px;
	}

	.boxed {
		box-shadow: inset 0 0 0 1px #ccc;
	}

	.side-tools {
		box-sizing: border-box;
		width: 28px;
		height: 487px;
		margin-left: 7px;
		border: 1px solid #c8c8cc;
		background: #fafafa;
		color: #444;
	}

	.side-tools span {
		display: flex;
		align-items: center;
		justify-content: center;
		box-sizing: border-box;
		width: 26px;
		height: 22px;
	}

	.side-tools .divided {
		height: 23px;
		margin-bottom: -1px;
		border-bottom: 1px solid #c8c8cc;
	}

	.side-tools .pressed {
		width: 22px;
		height: 20px;
		margin: 1px 2px;
		border: 1px solid #b4b4b4;
		border-radius: 3px;
		background: #ececec;
	}
</style>
